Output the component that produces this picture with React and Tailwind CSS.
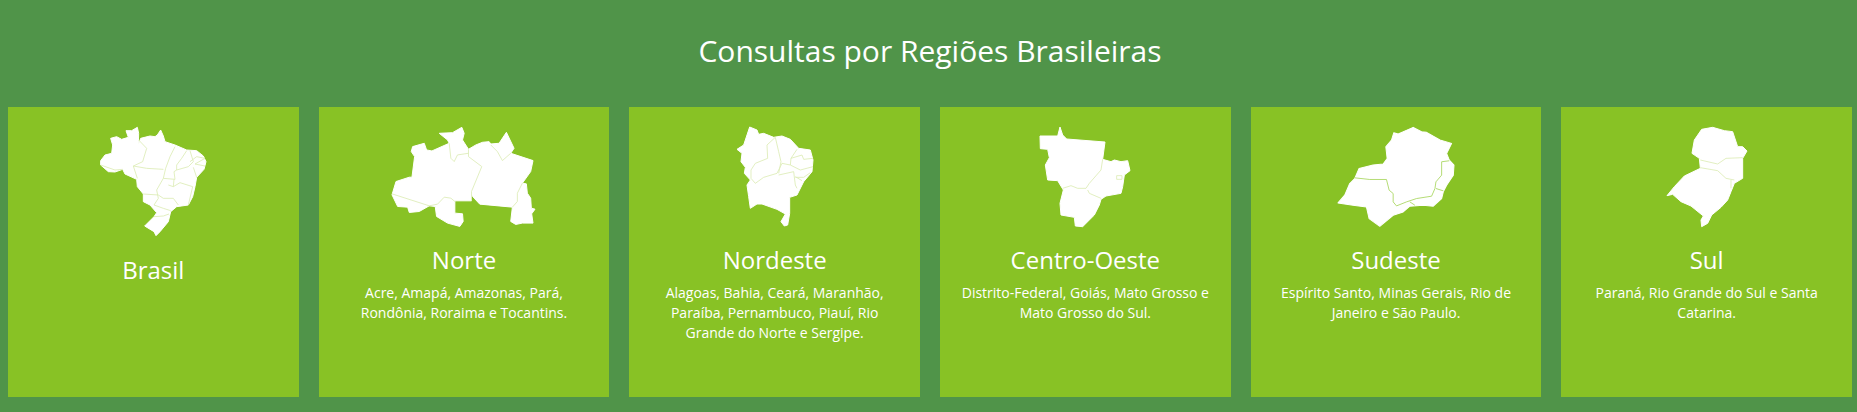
const regions = [
  {
    name: 'Brasil',
    titleClass: 'mt-4',
    text: '',
    viewBox: '300 111 318 326',
    w: 106,
    outline: '378,122 395,122 412,112 416,130 415,165 422,145 450,138 465,140 472,135 482,120 490,138 495,155 525,165 560,180 590,182 610,198 618,215 612,238 590,262 585,290 578,320 565,345 530,350 512,365 505,395 480,425 468,437 462,425 434,408 462,380 470,368 450,345 430,335 430,312 412,290 410,268 375,252 368,238 345,246 325,245 302,225 302,212 315,195 335,190 338,165 332,145 350,140 365,148 385,142',
    lines: [
      '302,225 345,240 368,238',
      '416,150 440,175 428,215 400,228 412,265',
      '400,228 440,235 490,238',
      '525,170 510,200 497,235 490,265 470,300 475,325',
      '430,312 475,315 490,325 520,325 535,345',
      '490,265 525,268 522,245 530,240',
      '560,182 545,205 530,225 530,240 565,230 580,215 570,182',
      '520,290 540,278 578,290 565,345',
      '475,325 462,345 490,355 512,362',
      '462,380 490,378 507,372',
      '570,215 590,200 615,205 585,222 615,228',
      '522,268 520,290 505,285',
      '580,232 590,262',
    ],
  },
  {
    name: 'Norte',
    text: 'Acre, Amapá, Amazonas, Pará, Rondônia, Roraima e Tocantins.',
    viewBox: '248 111 430 300',
    w: 143,
    outline: '310,170 345,160 352,180 368,183 420,160 415,150 390,130 430,128 458,112 465,130 460,150 478,178 500,165 520,157 540,155 545,162 570,160 592,127 603,150 615,175 605,190 672,212 665,245 640,280 652,282 655,310 665,325 667,355 678,358 668,372 672,400 640,400 620,404 605,395 610,352 512,343 495,325 487,315 487,333 437,333 437,370 460,372 462,395 452,410 415,400 382,380 378,350 360,348 330,365 300,368 295,352 265,350 248,315 260,275 300,262 308,262 316,200 306,185',
    lines: [
      '248,312 360,348',
      '360,348 385,343 405,322 425,325 437,335',
      '478,178 478,200 518,230 487,305 487,333',
      '420,160 425,205 435,215 445,195 478,190',
      '545,165 565,185 580,212 605,190',
      '640,280 625,310 625,335 610,352',
    ],
  },
  {
    name: 'Nordeste',
    text: 'Alagoas, Bahia, Ceará, Maranhão, Paraíba, Pernambuco, Piauí, Rio Grande do Norte e Sergipe.',
    viewBox: '320 111 228 298',
    w: 76,
    outline: '358,111 380,120 385,133 400,130 430,142 455,138 480,148 505,175 540,180 548,210 545,245 520,275 500,315 478,322 478,370 472,405 462,408 452,395 465,372 440,358 395,342 380,342 360,355 355,320 350,285 360,270 342,250 345,232 332,215 335,190 320,178 340,165',
    lines: [
      '435,142 410,165 412,205 375,220 362,240 362,265 375,280 400,262 440,250 445,240',
      '435,142 445,185 452,215 445,250',
      '445,240 455,220 480,225 510,240 548,230',
      '500,178 482,205 480,225',
      '482,205 515,195 520,208 548,205',
      '445,255 490,245 495,285 500,295',
      '495,262 520,262 540,248',
      '515,272 495,260',
    ],
  },
  {
    name: 'Centro-Oeste',
    text: 'Distrito-Federal, Goiás, Mato Grosso e Mato Grosso do Sul.',
    viewBox: '302 111 270 299',
    w: 90,
    outline: '302,138 355,138 362,111 370,135 382,147 497,156 490,208 515,215 525,210 545,215 565,212 572,242 555,255 550,290 545,310 500,318 485,328 480,345 465,375 430,410 408,408 405,382 365,375 362,340 372,300 355,272 325,270 318,225 330,203 325,178 303,176',
    lines: [
      '370,295 395,287 415,295 440,295',
      '490,208 485,240 450,280 440,295',
      '445,300 450,310 485,325',
      '532,257 548,257 548,268 532,268 532,257',
    ],
  },
  {
    name: 'Sudeste',
    text: 'Espírito Santo, Minas Gerais, Rio de Janeiro e São Paulo.',
    viewBox: '265 111 347 298',
    w: 116,
    lineClass: 'stroke-[#a6d55a]',
    outline: '432,128 445,132 490,112 515,125 530,127 570,150 605,160 590,190 598,210 612,225 610,255 590,285 580,305 575,325 550,348 520,345 480,348 460,365 430,375 390,408 358,385 350,350 310,345 265,338 285,315 300,280 315,265 328,235 370,225 400,222 412,205 408,170 425,150',
    lines: [
      '315,263 360,268 410,268 418,300 430,310 430,335 440,347 470,335 500,325 545,318 555,295 558,275 575,255 575,215 598,212',
      '558,295 580,302',
      '480,335 495,345',
    ],
  },
  {
    name: 'Sul',
    text: 'Paraná, Rio Grande do Sul e Santa Catarina.',
    viewBox: '328 111 240 299',
    w: 80,
    outline: '432,118 465,112 500,122 525,125 540,170 555,170 568,183 555,205 555,265 530,280 520,305 510,330 490,352 462,375 450,400 432,410 430,390 437,378 400,348 370,335 345,313 328,317 350,290 380,258 428,235 425,205 403,190 410,150',
    lines: [
      '428,210 480,222 505,205 555,203',
      '428,233 480,242 505,265 530,270',
      '520,270 520,295',
    ],
  },
]

function RegionMap({ region }) {
  return (
    <svg viewBox={region.viewBox} width={region.w} height="110" preserveAspectRatio="xMidYMin meet" className="shrink-0 overflow-visible">
      <polygon points={region.outline} fill="#ffffff" stroke="#ffffff" strokeWidth="3" strokeLinejoin="round" />
      {region.lines.map((line) => (
        <polyline
          key={line}
          points={line}
          fill="none"
          strokeWidth="2.5"
          className={region.lineClass || 'stroke-[#dcecb4]'}
        />
      ))}
    </svg>
  )
}

export default function App() {
  return (
    <div className="min-h-[412px] bg-[#509449] pl-2 pr-[5px] font-['Open_Sans',sans-serif] text-white">
      <h1 className="h-[107px] pt-[30px] text-center text-[30px] leading-[42px] font-normal">
        Consultas por Regiões Brasileiras
      </h1>
      <div className="grid grid-cols-6 gap-5">
        {regions.map((region) => (
          <div key={region.name} className="flex h-[290px] flex-col items-center bg-[#88c225] px-5 pt-5 text-center">
            <RegionMap region={region} />
            <h2 className={`${region.titleClass || 'mt-1.5'} text-2xl leading-[34px] font-normal`}>{region.name}</h2>
            {region.text && <p className="mt-1.5 text-sm leading-5">{region.text}</p>}
          </div>
        ))}
      </div>
    </div>
  )
}
